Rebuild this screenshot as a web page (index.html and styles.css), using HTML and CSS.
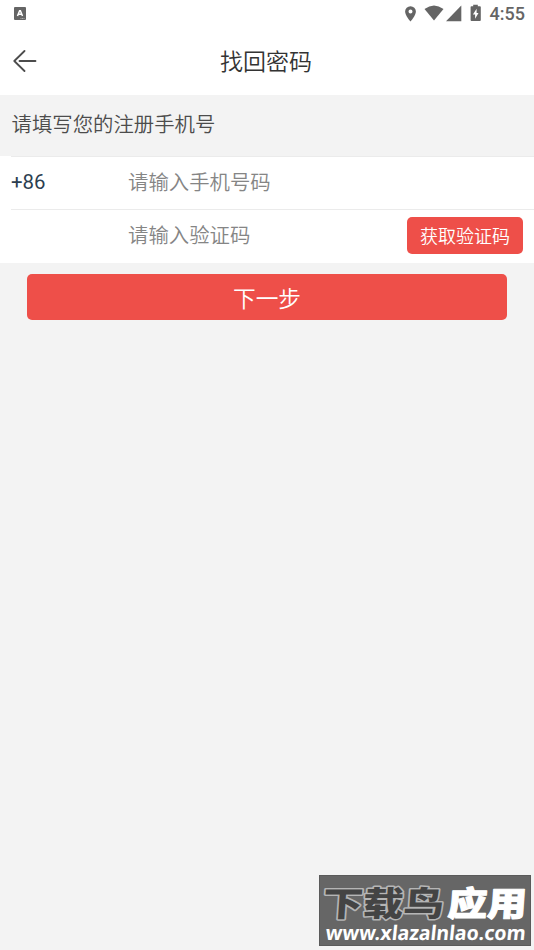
FILE: index.html
```html
<!DOCTYPE html>
<html lang="zh-CN">
<head>
<meta charset="utf-8">
<title>找回密码</title>
<link rel="stylesheet" href="styles.css">
</head>
<body>
<div class="screen">
  <div class="status">
    <svg class="app" width="12" height="13" viewBox="0 0 12 13"><rect width="12" height="13" rx="1" fill="#656565"/><path d="M3.500 9 5.600 3.700h.8L8.500 9M4.500 7.200h3" fill="none" stroke="#fff" stroke-width="1.500"/><path d="M6.500 11.500h4" stroke="#ccc" stroke-width=".7" stroke-dasharray="1 .5"/></svg>
    <div class="indicators">
      <svg width="78" height="18" viewBox="0 0 78 18" fill="#656565">
        <path fill-rule="evenodd" d="M6.500 1.200A5.400 5.400 0 0 0 1.100 6.600C1.100 10.600 6.500 16.600 6.500 16.600S11.900 10.600 11.900 6.600A5.400 5.400 0 0 0 6.500 1.200zM6.500 4.600a2 2 0 1 1 0 4 2 2 0 0 1 0-4z"/>
        <path d="M20.500 4Q30-3 39.500 4L30 15.600z"/>
        <path d="M57.300 .5v15.700H42z"/>
        <path fill-rule="evenodd" d="M69.200 1.200V-.2h4.600v1.400h2.100q.9 0 .9.900v13q0 .9-.9.900h-8.400q-.9 0-.9-.9v-13q0-.9.900-.9zM72.600 3.700 68.900 9.500h2.200v4.200l3.400-5.800h-1.900z"/>
      </svg>
      <span class="time">4:55</span>
    </div>
  </div>
  <header class="nav">
    <svg class="back" width="24" height="22" viewBox="0 0 24 22" fill="none" stroke="#4c4c4c" stroke-width="1.800" stroke-linecap="round" stroke-linejoin="round"><path d="M11.500 1 1.300 11l10.200 10M6.500 11H22.500"/></svg>
    <h1>找回密码</h1>
  </header>
  <main>
    <p class="hint">请填写您的注册手机号</p>
    <div class="form">
      <div class="row"><span class="prefix">+86</span><span class="field">请输入手机号码</span></div>
      <div class="row last"><span class="prefix"></span><span class="field">请输入验证码</span><button class="code">获取验证码</button></div>
    </div>
    <button class="next">下一步</button>
  </main>
  <div class="watermark">
    <svg width="212" height="71" viewBox="0 0 212 71">
      <g class="brand" transform="translate(0 41) skewX(-4)">
        <text class="dark" x="3" y="0" textLength="121" lengthAdjust="spacingAndGlyphs">下载鸟</text>
        <text class="light" x="128" y="0" textLength="79" lengthAdjust="spacingAndGlyphs">应用</text>
      </g>
      <g transform="translate(6 65) skewX(-6)"><text class="url" x="0" y="0" textLength="200" lengthAdjust="spacingAndGlyphs">www.xlazalnlao.com</text></g>
    </svg>
  </div>
</div>
</body>
</html>
```
FILE: styles.css
```css
* { box-sizing: border-box; }
body { margin: 0; background: #f3f3f3; font-family: Roboto, "Noto Sans CJK SC", sans-serif; }
button { border: 0; padding: 0; font-family: inherit; color: #fff; background: #ee4f49; }
h1, .hint, .field, .code, .next { font-family: "Noto Sans CJK SC DemiLight", "Noto Sans CJK SC", sans-serif; font-weight: 350; }
.screen { position: relative; height: 950px; overflow: hidden; }
.status { height: 27px; padding: 5px 9px 0 14px; display: flex; justify-content: space-between; background: #fff; }
.app { margin-top: 2px; }
.indicators { display: flex; gap: 8px; height: 18px; }
.indicators svg { flex: none; overflow: visible; }
.time { font-size: 18px; line-height: 18px; font-weight: 500; color: #656565; }
.nav { height: 68px; display: grid; grid-template-columns: 60px 1fr 60px; align-items: center; background: #fff; }
.back { margin-left: 13px; }
h1 { margin: 0 2px 2px 0; font-size: 23px; text-align: center; color: #333; line-height: 34px; }
.hint { margin: 0; height: 61px; padding: 13px 11.500px; font-size: 20.400px; line-height: 30px; color: #4c4c4c; }
.form { background: #fff; }
.row { height: 53px; margin-left: 11px; padding-right: 11px; display: flex; align-items: center; border-top: 1px solid #ebebeb; }
.last { height: 54px; }
.prefix { width: 117px; margin-top: -2px; font-size: 20.400px; color: #2c3e50; }
.field { flex: 1; font-size: 20.400px; line-height: 30px; margin-top: -5px; color: #858585; }
.code { width: 116px; height: 37px; margin-top: -3px; padding-bottom: 1px; border-radius: 5px; font-size: 18px; }
.next { display: block; width: 480px; height: 46px; margin: 11px 0 0 27px; border-radius: 5px; font-size: 22.700px; }
.watermark { position: absolute; left: 319px; top: 875px; width: 212px; height: 71px; background: #666; border: 1px solid #5a5a5a; }
.watermark svg { display: block; margin: -1px; overflow: visible; }
.brand { font: 900 34px "Noto Sans CJK SC", sans-serif; paint-order: stroke; stroke-linejoin: round; }
.dark { fill: #444; stroke: #b5b5b5; stroke-width: 3px; }
.light { fill: #fff; stroke: #fff; stroke-width: 1px; }
.url { font: 700 20px "Noto Sans", "Open Sans", sans-serif; fill: #fff; }
```
